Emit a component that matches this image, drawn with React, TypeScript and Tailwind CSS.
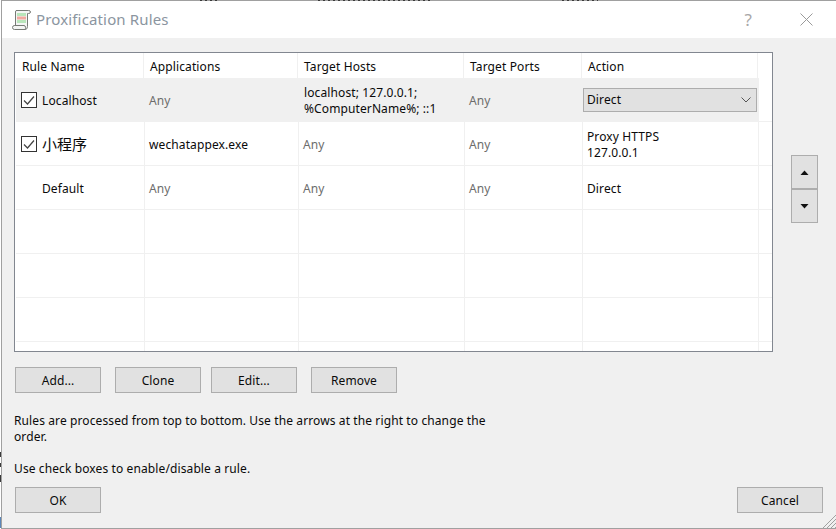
import React from "react";

const bodyW = ["w-[129px]", "w-[154px]", "w-[166px]", "w-[118px]", "w-[176px]"];
const headW = ["w-[128px]", "w-[154px]", "w-[166px]", "w-[118px]", "w-[176px]"];

function Cell({ i, className = "", children }: { i: number; className?: string; children?: React.ReactNode }) {
  return <div className={`${bodyW[i]} shrink-0 h-full flex items-center pt-[2px] leading-[16px] border-r border-[#f0f0f0] ${className}`}>{children}</div>;
}

function Check() {
  return (
    <span className="w-[16px] h-[16px] -mt-[2px] border border-[#333] bg-white flex items-center justify-center shrink-0">
      <svg width="12" height="12" viewBox="0 0 12 12" fill="none" stroke="#444" strokeWidth="1.2"><path d="M1 6.5 L4.5 10 L11 2.5" /></svg>
    </span>
  );
}

function Btn({ children, className = "" }: { children: React.ReactNode; className?: string }) {
  return <div className={`w-[86px] h-[26px] pt-[2px] bg-[#e1e1e1] border border-[#adadad] flex items-center justify-center ${className}`}>{children}</div>;
}

function Row({ className = "", children }: { className?: string; children: React.ReactNode }) {
  return <div className={`flex h-[44px] shrink-0 border-b border-[#f0f0f0] ${className}`}>{children}</div>;
}

const Any = () => <span className="text-[#6d6d6d]">Any</span>;

const dots = "bg-[repeating-linear-gradient(90deg,#3a3a3a_0_2px,#a0a0a0_2px_5px)]";

export default function App() {
  return (
    <div className="w-[836px] h-[529px] bg-white overflow-hidden relative text-[12px] tracking-[0.11px] text-[#0a0a0a]" style={{ fontFamily: '"Noto Sans", "Noto Sans CJK SC", sans-serif' }}>
      <div className="h-full ml-[1px] border-l border-t border-b border-[#a0a0a0] bg-[#f0f0f0] flex flex-col">
        <div className="h-[37px] bg-white shrink-0 flex items-center pl-[10px]">
          <svg width="20" height="22" viewBox="0 0 20 22" className="shrink-0">
            <path d="M4 1.5 H16.5 Q18.5 1.5 18.5 3 Q18.5 4.5 16.5 4.5 H15.5 V17.5 Q15.5 20.5 13 20.5 H2.5 Q0.5 20.5 0.5 18.5 Q0.5 16.5 2.5 16.5 H3.5 V3 Q3.5 1.5 4.5 1.5 Z" fill="#f4f5f4" stroke="#777b76" strokeWidth="1" />
            <path d="M2.5 16.5 H12 Q13.5 16.5 13.5 18.5 Q13.5 20 13 20.5" fill="none" stroke="#777b76" strokeWidth="1" />
            <rect x="5" y="4" width="9" height="3" fill="#b9e6bb" />
            <rect x="5" y="7.5" width="9" height="3" fill="#f2a9a0" />
            <rect x="5" y="11" width="9" height="3" fill="#b9e6bb" />
          </svg>
          <span className="text-[15px] tracking-[0.15px] text-[#8b95a0] ml-[4px]">Proxification Rules</span>
          <span className="ml-auto text-[17px] text-[#a8a8a8]">?</span>
          <svg width="13" height="13" viewBox="0 0 13 13" className="ml-[48px] mr-[23px]" stroke="#9a9a9a" strokeWidth="1"><path d="M0.5 0.5 L12.5 12.5 M12.5 0.5 L0.5 12.5" /></svg>
        </div>

        <div className="flex-1 flex flex-col pl-[12px] pr-[12px] pt-[14px]">
          <div className="flex items-start">
            <div className="w-[759px] h-[300px] bg-white border border-[#828790] overflow-hidden shrink-0 pl-[1px]">
              <div className="flex h-[25px] shrink-0">
                {["Rule Name", "Applications", "Target Hosts", "Target Ports", "Action"].map((t, i) => (
                  <div key={t} className={`${headW[i]} shrink-0 h-full flex items-center pt-[2px] pl-[6px] leading-[16px] border-r border-[#f0f0f0]`}>{t}</div>
                ))}
              </div>
              <Row>
                <Cell i={0} className="bg-[#f0f0f0] gap-[5px] pl-[5px]"><Check />Localhost</Cell>
                <Cell i={1} className="bg-[#f0f0f0] pl-[4px]"><Any /></Cell>
                <Cell i={2} className="bg-[#f0f0f0] pl-[5px]"><span>localhost; 127.0.0.1;<br />%ComputerName%; ::1</span></Cell>
                <Cell i={3} className="bg-[#f0f0f0] pl-[4px]"><Any /></Cell>
                <div className="w-[176px] shrink-0 h-full flex items-center bg-[#f0f0f0] border-r border-[#f0f0f0]">
                  <div className="w-[174px] h-[24px] pt-[1px] bg-[#e1e1e1] border border-[#adadad] flex items-center justify-between pl-[3px] pr-[5px]">
                    Direct
                    <svg width="10" height="6" viewBox="0 0 10 6" fill="none" stroke="#555"><path d="M0.5 0.5 L5 5 L9.5 0.5" /></svg>
                  </div>
                </div>
              </Row>
              <Row>
                <Cell i={0} className="gap-[5px] pl-[5px]"><Check /><span className="text-[15px] -mt-[2px] tracking-normal" style={{ fontFamily: '"Noto Sans CJK SC", sans-serif' }}>小程序</span></Cell>
                <Cell i={1} className="pl-[4px]">wechatappex.exe</Cell>
                <Cell i={2} className="pl-[4px]"><Any /></Cell>
                <Cell i={3} className="pl-[4px]"><Any /></Cell>
                <Cell i={4} className="pl-[4px]"><span>Proxy HTTPS<br />127.0.0.1</span></Cell>
              </Row>
              <Row>
                <Cell i={0} className="pl-[26px]">Default</Cell>
                <Cell i={1} className="pl-[4px]"><Any /></Cell>
                <Cell i={2} className="pl-[4px]"><Any /></Cell>
                <Cell i={3} className="pl-[4px]"><Any /></Cell>
                <Cell i={4} className="pl-[4px]">Direct</Cell>
              </Row>
              {[0, 1, 2, 3].map((k) => (
                <Row key={k}>
                  {[0, 1, 2, 3, 4].map((i) => <Cell key={i} i={i} />)}
                </Row>
              ))}
            </div>
            <div className="ml-[18px] mt-[103px] flex flex-col w-[27px]">
              <div className="h-[34px] bg-[#e1e1e1] border border-[#adadad] flex items-center justify-center">
                <svg width="9" height="5" viewBox="0 0 9 5"><path d="M0.5 5 L4.5 0.5 L8.5 5 Z" fill="#111" /></svg>
              </div>
              <div className="h-[34px] bg-[#e1e1e1] border border-[#adadad] flex items-center justify-center">
                <svg width="9" height="5" viewBox="0 0 9 5"><path d="M0.5 0 L8.5 0 L4.5 4.5 Z" fill="#111" /></svg>
              </div>
            </div>
          </div>

          <div className="flex mt-[15px] ml-[1px]">
            <Btn>Add...</Btn>
            <Btn className="ml-[14px]">Clone</Btn>
            <Btn className="ml-[10px]">Edit...</Btn>
            <Btn className="ml-[14px]">Remove</Btn>
          </div>

          <p className="mt-[20px] w-[490px] leading-[16px]">Rules are processed from top to bottom. Use the arrows at the right to change the order.</p>
          <p className="mt-[16px] leading-[16px]">Use check boxes to enable/disable a rule.</p>

          <div className="flex justify-between mt-[10px] ml-[1px] mr-[1px]">
            <Btn>OK</Btn>
            <Btn>Cancel</Btn>
          </div>
        </div>
      </div>

      <div className={`absolute top-0 left-[200px] w-[20px] h-[1px] ${dots}`} />
      <div className={`absolute top-0 left-[318px] w-[114px] h-[1px] ${dots}`} />
      <div className={`absolute top-0 left-[562px] w-[36px] h-[1px] ${dots}`} />
      <div className="absolute left-0 top-[452px] w-[1px] h-[5px] bg-[#3a3a3a]" />
      <div className="absolute left-0 top-[463px] w-[1px] h-[4px] bg-[#3a3a3a]" />
      <div className="absolute left-0 top-[475px] w-[1px] h-[7px] bg-[#3a3a3a]" />
      <div className="absolute left-0 top-[517px] w-[1px] h-[11px] bg-[#5b86b8]" />

      <svg width="14" height="14" viewBox="0 0 14 14" className="absolute right-0 bottom-0" stroke="#a0a0a0" strokeWidth="1">
        <path d="M14 0 L0 14 M14 4 L4 14 M14 8 L8 14 M14 12 L12 14" />
      </svg>
    </div>
  );
}
